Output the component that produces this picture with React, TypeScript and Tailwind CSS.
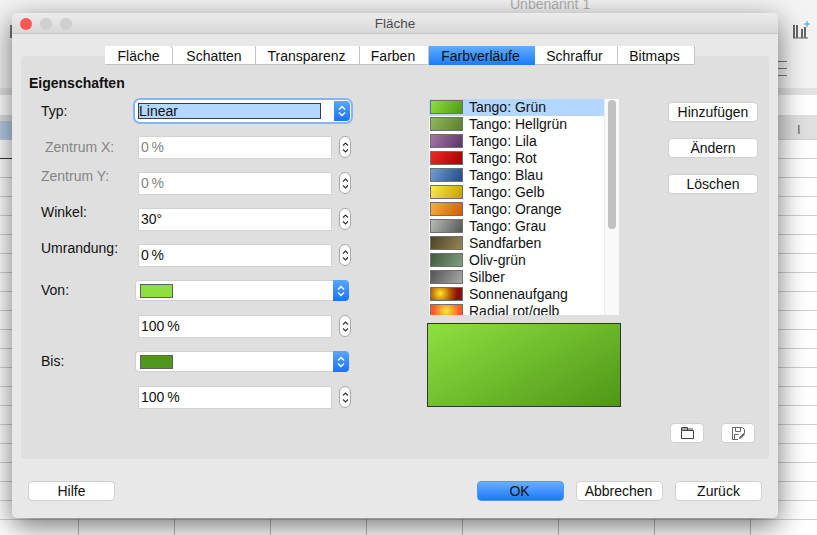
import React from 'react';

const gradients = [
  { name: 'Tango: Grün', swatch: 'bg-[linear-gradient(120deg,#8de03a,#4e9a16)]' },
  { name: 'Tango: Hellgrün', swatch: 'bg-[linear-gradient(120deg,#90b85c,#5e7f2f)]' },
  { name: 'Tango: Lila', swatch: 'bg-[linear-gradient(120deg,#a676a8,#5c3566)]' },
  { name: 'Tango: Rot', swatch: 'bg-[linear-gradient(120deg,#ef2929,#a40000)]' },
  { name: 'Tango: Blau', swatch: 'bg-[linear-gradient(120deg,#729fcf,#204a87)]' },
  { name: 'Tango: Gelb', swatch: 'bg-[linear-gradient(120deg,#fce94f,#c4a000)]' },
  { name: 'Tango: Orange', swatch: 'bg-[linear-gradient(120deg,#fcaf3e,#ce5c00)]' },
  { name: 'Tango: Grau', swatch: 'bg-[linear-gradient(120deg,#babdb6,#555753)]' },
  { name: 'Sandfarben', swatch: 'bg-[linear-gradient(120deg,#4d4326,#958656)]' },
  { name: 'Oliv-grün', swatch: 'bg-[linear-gradient(120deg,#3f5a42,#80a080)]' },
  { name: 'Silber', swatch: 'bg-[linear-gradient(120deg,#555555,#a8a8a8)]' },
  { name: 'Sonnenaufgang', swatch: 'bg-[radial-gradient(circle_at_30%_45%,#ffe82a_0%,#b85a00_45%,#8a0f0f_75%)]' },
  { name: 'Radial rot/gelb', swatch: 'bg-[radial-gradient(circle_at_50%_50%,#f4e93a_0%,#ff5a2a_80%)]' },
];

const tabs = [
  { label: 'Fläche', width: 'w-[68px]', nudge: '' },
  { label: 'Schatten', width: 'w-[83px]', nudge: '' },
  { label: 'Transparenz', width: 'w-[104px]', nudge: 'pr-[2px]' },
  { label: 'Farben', width: 'w-[69px]', nudge: 'pr-[2px]' },
  { label: 'Farbverläufe', width: 'w-[106px]', nudge: 'pr-[3px]', active: true },
  { label: 'Schraffur', width: 'w-[83px]', nudge: 'pr-[3px]' },
  { label: 'Bitmaps', width: 'w-[77px]', nudge: 'pr-[3px]' },
];

export default function App() {
  return (
    <div className="relative h-[535px] w-[817px] overflow-hidden bg-white font-['Liberation_Sans',Arial,sans-serif] text-[14px] text-[#111]">
      <Spreadsheet />

      {/* Dialog window */}
      <div className="absolute left-[12px] top-[13px] flex h-[505px] w-[766px] flex-col rounded-[5px] bg-[#e8e8e8] shadow-[0_8px_28px_rgba(0,0,0,0.55)]">
        <TitleBar />

        {/* Tabs */}
        <div className="relative z-10 -mb-[9px] ml-[93px] mt-[12px] flex h-[19px]">
          {tabs.map((tab) => (
            <div
              key={tab.label}
              className={
                tab.active
                  ? `${tab.width} ${tab.nudge} flex items-center justify-center bg-[linear-gradient(#63adff,#1c7bff)] pt-px leading-none`
                  : `${tab.width} ${tab.nudge} flex items-center justify-center border-b border-r border-[#c4c4c4] bg-white pt-[2px] leading-none first:rounded-tr-[4px]`
              }
            >
              {tab.label}
            </div>
          ))}
        </div>

        {/* Panel */}
        <div className="mx-[9px] flex h-[403px] rounded-[4px] bg-[#dfdfdf]">
          <div className="w-[406px] shrink-0 pl-[8px] pt-[19px]">
            <h2 className="text-[14px] font-bold leading-[16px]">Eigenschaften</h2>
            <div className="mt-[9px] flex flex-col gap-[13px] pl-[12px]">
              <Row label="Typ:">
                <TypeSelect />
              </Row>
              <Row label="Zentrum X:" dim labelClass="pb-[2px] pl-[4px]">
                <Field value="0 %" dim />
              </Row>
              <Row label="Zentrum Y:" dim labelClass="pb-[16px]">
                <Field value="0 %" dim />
              </Row>
              <Row label="Winkel:" labelClass="pb-[16px]">
                <Field value="30°" />
              </Row>
              <Row label="Umrandung:" labelClass="pb-[16px]">
                <Field value="0 %" />
              </Row>
              <Row label="Von:" short>
                <ColorSelect swatch="bg-[#8ce040]" />
              </Row>
              <Row>
                <Field value="100 %" />
              </Row>
              <Row label="Bis:" short>
                <ColorSelect swatch="bg-[#4f961c]" />
              </Row>
              <Row>
                <Field value="100 %" />
              </Row>
            </div>
          </div>

          {/* Gradient list and preview */}
          <div className="w-[194px] shrink-0 pt-[43px]">
            <div className="ml-[2px] flex h-[216px] w-[190px] overflow-hidden bg-white">
              <ul className="w-[175px] shrink-0">
                {gradients.map((item, i) => (
                  <li
                    key={item.name}
                    className={i === 0 ? 'flex h-[17px] items-center bg-[#b3d7ff] pl-px' : 'flex h-[17px] items-center pl-px'}
                  >
                    <span className={`${item.swatch} mt-px h-[14px] w-[33px] shrink-0 self-start border border-[#6f6f6f]`} />
                    <span className="ml-[6px] pb-[2px] leading-none">{item.name}</span>
                  </li>
                ))}
              </ul>
              <div className="w-[15px] shrink-0 border-l border-[#ececec] bg-[#f9f9f9] pl-[3px] pt-px">
                <div className="h-[129px] w-[8px] rounded-full bg-[#c1c1c1]" />
              </div>
            </div>
            <div className="mt-[8px] h-[84px] w-[194px] border border-[#333] bg-[linear-gradient(150deg,#8de040,#4f9618)]" />
          </div>

          {/* Side buttons */}
          <div className="ml-[47px] flex w-[90px] flex-col pt-[46px]">
            <div className="flex flex-col gap-[16px]">
              <SmallButton label="Hinzufügen" />
              <SmallButton label="Ändern" />
              <SmallButton label="Löschen" />
            </div>
            <div className="mb-[16px] mt-auto flex gap-[17px] pl-[2px]">
              <IconButton>
                <FolderIcon />
              </IconButton>
              <IconButton>
                <SaveIcon />
              </IconButton>
            </div>
          </div>
        </div>

        {/* Footer */}
        <div className="flex justify-between px-[16px] pt-[22px]">
          <FooterButton label="Hilfe" />
          <div className="flex gap-[12px]">
            <FooterButton label="OK" primary nudge="pr-[2px]" />
            <FooterButton label="Abbrechen" nudge="pr-[2px]" />
            <FooterButton label="Zurück" />
          </div>
        </div>
      </div>
    </div>
  );
}

/* ——— Background document ——— */

function Spreadsheet() {
  return (
    <div className="flex h-full flex-col">
      <div className="relative h-[88px] bg-[#f3f3f3]">
        <div className="pl-[510px] leading-[9px] text-[#b0b0b0]">Unbenannt 1</div>
        <div className="absolute left-[10px] top-[25px] h-[13px] w-[2px] bg-[#777]" />
        <svg className="absolute left-[792px] top-[20px] h-[20px] w-[18px]" viewBox="0 0 18 20" fill="none">
          <path d="M1 18h15" stroke="#666" />
          <path d="M2 5v13M5 5v13M10 9v9M13 7v11" stroke="#666" strokeWidth="2" />
          <path d="M15 1v6M12 4h6" stroke="#3b9cf5" />
        </svg>
        <div className="absolute left-[778px] top-[61px] flex w-[9px] flex-col gap-[6px]">
          <div className="h-px bg-[#777]" />
          <div className="h-px bg-[#777]" />
          <div className="h-px bg-[#777]" />
        </div>
      </div>
      <div className="h-[7px] bg-[#e2e2e2]" />
      <div className="h-[20px] bg-white" />
      <div className="relative h-[24px] bg-[#e0e0e0]">
        <div className="absolute bottom-0 left-0 h-[18px] w-[14px] bg-[#b5cde8]" />
        <span className="absolute left-[797px] top-[8px] text-[13px] leading-none text-[#6b6250]">I</span>
      </div>
      <div className="relative flex-1 bg-white bg-[linear-gradient(to_bottom,#cfcfcf_1px,transparent_1px),linear-gradient(to_right,#b8b8b8_1px,transparent_1px)] bg-[position:0_0,78px_0] [background-size:100%_19px,96px_100%]">
        <div className="absolute left-0 top-[19px] h-px w-[14px] bg-[#333]" />
      </div>
    </div>
  );
}

/* ——— Small building blocks ——— */

function TitleBar() {
  return (
    <div className="relative flex h-[21px] shrink-0 items-center justify-center rounded-t-[5px] border-b border-[#c6c6c6] bg-[linear-gradient(#ececec,#d8d8d8)] pt-px">
      <div className="absolute left-[8px] top-[5px] flex gap-[8px]">
        <span className="h-[12px] w-[12px] rounded-full bg-[#fc5753]" />
        <span className="h-[12px] w-[12px] rounded-full bg-[#cfcfcf]" />
        <span className="h-[12px] w-[12px] rounded-full bg-[#cfcfcf]" />
      </div>
      <span className="text-[13.5px] leading-none text-[#4c4c4c]">Fläche</span>
    </div>
  );
}

function Row({
  label,
  dim,
  short,
  labelClass = 'pb-[2px]',
  children,
}: {
  label?: string;
  dim?: boolean;
  short?: boolean;
  labelClass?: string;
  children: React.ReactNode;
}) {
  return (
    <div className={short ? 'flex h-[22px] items-center' : 'flex h-[23px] items-center'}>
      <div className={`w-[97px] shrink-0 leading-none ${dim ? 'text-[#858585]' : ''} ${labelClass}`}>{label}</div>
      {children}
    </div>
  );
}

function Field({ value, dim }: { value: string; dim?: boolean }) {
  return (
    <>
      <div
        className={`flex h-[23px] w-[194px] items-center border border-[#d2d2d2] bg-white pb-[2px] pl-[2px] leading-none ${
          dim ? 'text-[#858585]' : ''
        }`}
      >
        {value.replace(' ', '\u2009')}
      </div>
      <Stepper />
    </>
  );
}

function Stepper() {
  return (
    <div className="ml-[7px] flex h-[22px] w-[12px] flex-col items-center justify-center gap-[3px] self-start rounded-full border border-[#a8a8a8] bg-white">
      <svg className="h-[4px] w-[7px]" viewBox="0 0 7 4" fill="none">
        <path d="M1 3.5 3.5 1 6 3.5" stroke="#333" strokeWidth="1.2" />
      </svg>
      <svg className="h-[4px] w-[7px]" viewBox="0 0 7 4" fill="none">
        <path d="M1 .5 3.5 3 6 .5" stroke="#333" strokeWidth="1.2" />
      </svg>
    </div>
  );
}

function SelectArrows() {
  return (
    <div className="flex w-[16px] shrink-0 items-center justify-center rounded-r-[4px] bg-[linear-gradient(#5aa6ff,#1a72ff)]">
      <svg className="h-[14px] w-[10px]" viewBox="0 0 10 14" fill="none">
        <path d="M2 5.5 5 2.5 8 5.5M2 8.5l3 3 3-3" stroke="#fff" strokeWidth="1.4" />
      </svg>
    </div>
  );
}

function TypeSelect() {
  return (
    <div className="-ml-[3px] flex h-[22px] w-[216px] self-start rounded-[5px] bg-white p-px shadow-[0_0_0_2px_#86b6ee]">
      <div className="flex-1 pl-[2px] pt-[2px]">
        <div className="h-[16px] w-[183px] border border-[#3c3c3c] bg-[#b3d7ff] pt-px leading-[13px]">Linear</div>
      </div>
      <SelectArrows />
    </div>
  );
}

function ColorSelect({ swatch }: { swatch: string }) {
  return (
    <div className="-ml-[3px] flex h-[21px] w-[214px] self-start">
      <div className="flex flex-1 items-center rounded-l-[4px] border-y border-l border-[#d0d0d0] bg-white pl-[4px]">
        <div className={`${swatch} h-[14px] w-[33px] border border-[#5f5f5f]`} />
      </div>
      <SelectArrows />
    </div>
  );
}

function SmallButton({ label }: { label: string }) {
  return (
    <div className="flex h-[20px] items-center justify-center rounded-[4px] border border-[#d0d0d0] bg-white leading-none">
      {label}
    </div>
  );
}

function IconButton({ children }: { children: React.ReactNode }) {
  return (
    <div className="flex h-[20px] w-[34px] items-center justify-center rounded-[4px] border border-[#cfcfcf] bg-white">
      {children}
    </div>
  );
}

function FooterButton({ label, primary, nudge = '' }: { label: string; primary?: boolean; nudge?: string }) {
  return (
    <div
      className={
        primary
          ? `${nudge} flex h-[20px] w-[87px] items-center justify-center rounded-[4px] border border-[#4f97f0] bg-[linear-gradient(#69aefc,#1b78ff)] leading-none`
          : `${nudge} flex h-[20px] w-[87px] items-center justify-center rounded-[4px] border border-[#d0d0d0] bg-white leading-none`
      }
    >
      {label}
    </div>
  );
}

function FolderIcon() {
  return (
    <svg className="h-[12px] w-[13px]" viewBox="0 0 13 12" fill="none">
      <path d="M.5 3.5h12v8H.5zM.5 3.5V.5h6v3M.5 2h11.5" stroke="#444" />
    </svg>
  );
}

function SaveIcon() {
  return (
    <svg className="h-[13px] w-[13px]" viewBox="0 0 13 13" fill="none">
      <path d="M6 12.5H.5V.5h10l2 2v4" stroke="#666" />
      <path d="M3.5.5v4h5v-4M2.5 12.5v-5h4" stroke="#666" />
      <path d="M7 12l.5-2 4-4 1.5 1.5-4 4z" fill="#666" />
    </svg>
  );
}
